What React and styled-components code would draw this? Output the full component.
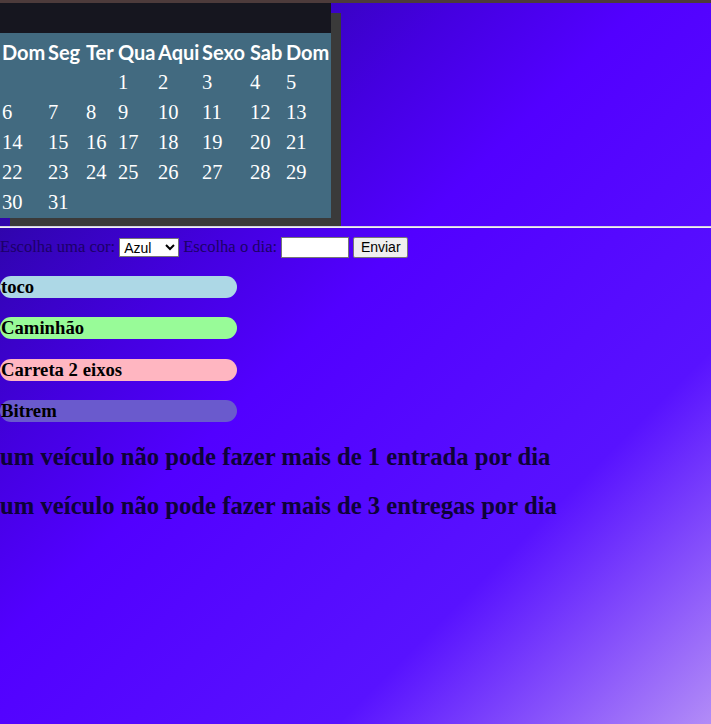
import React from 'react';
import styled, { createGlobalStyle } from 'styled-components';

const GlobalStyle = createGlobalStyle`
  html, body {
    margin: 0;
    padding: 0;
    min-height: 100%;
  }
  body {
    min-height: 100vh;
    font-family: "Liberation Serif", "Times New Roman", serif;
    background: linear-gradient(
      135deg,
      #200870 0%,
      #3204b4 18%,
      #4400e0 32%,
      #5200ff 45%,
      #5812ff 74%,
      #b28cf7 100%
    );
    background-attachment: fixed;
  }
`;

const TopStrip = styled.div`
  height: 3px;
  background-color: #4d3b3b;
`;

const Calendar = styled.div`
  width: 331px;
  box-shadow: 10px 10px 0 #3a3a3a;
`;

const CalendarHead = styled.div`
  height: 30px;
  background-color: #16161f;
`;

const Grid = styled.div`
  display: grid;
  grid-template-columns: 46px 38px 32px 40px 44px 48px 36px 45px;
  grid-auto-rows: 30px;
  padding: 4px 0 1px 2px;
  background-color: #426a80;
  color: #fff;
`;

const DayName = styled.div`
  font-family: Lato, "Open Sans", sans-serif;
  font-weight: 700;
  font-size: 20px;
  line-height: 30px;
  white-space: nowrap;
`;

const DayNumber = styled.div`
  font-family: "Liberation Serif", "Times New Roman", serif;
  font-size: 20.5px;
  line-height: 30px;
`;

const Divider = styled.hr`
  margin: 8px 0 0;
  border: none;
  border-top: 1px solid #cfcfe0;
  border-bottom: 1px solid #f2f2f2;
`;

const Form = styled.form`
  display: flex;
  align-items: center;
  gap: 4px;
  margin-top: 8px;
  height: 22px;
  font-size: 16.6px;
  color: #1c0068;
`;

const Select = styled.select`
  width: 60px;
  height: 19px;
  font-family: "Liberation Sans", Arial, sans-serif;
  font-size: 14px;
  padding: 0;
  border: 1px solid #767676;
  background: #fff;
  color: #000;
`;

const DayInput = styled.input`
  box-sizing: border-box;
  width: 68px;
  height: 21px;
  border: 1px solid #767676;
  background: #fff;
  padding: 0 2px;
`;

const SubmitButton = styled.button`
  box-sizing: border-box;
  width: 55px;
  height: 21px;
  padding: 0;
  font-family: "Liberation Sans", Arial, sans-serif;
  font-size: 14px;
  color: #000;
  background: #efefef;
  border: 1px solid #767676;
  border-radius: 2px;
`;

const Vehicles = styled.div`
  display: flex;
  flex-direction: column;
  gap: 19.4px;
  margin-top: 18px;
`;

const Pill = styled.div`
  width: 237px;
  height: 22px;
  border-radius: 11px;
  background-color: ${p => p.$bg};
  font-size: 18.7px;
  font-weight: 700;
  line-height: 22px;
  color: #000;
  padding-left: 1px;
  box-sizing: border-box;
  white-space: nowrap;
`;

const Rule = styled.h2`
  margin: 21px 0 0;
  font-size: 24.7px;
  line-height: 28px;
  font-weight: 700;
  color: #0e0238;
`;

const days = ['Dom', 'Seg', 'Ter', 'Qua', 'Aqui', 'Sexo', 'Sab', 'Dom'];
const cells = [
  '', '', '', '1', '2', '3', '4', '5',
  '6', '7', '8', '9', '10', '11', '12', '13',
  '14', '15', '16', '17', '18', '19', '20', '21',
  '22', '23', '24', '25', '26', '27', '28', '29',
  '30', '31', '', '', '', '', '', '',
];

const vehicles = [
  { name: 'toco', color: '#add8e6' },
  { name: 'Caminhão', color: '#98fb98' },
  { name: 'Carreta 2 eixos', color: '#ffb6c1' },
  { name: 'Bitrem', color: '#6a5acd' },
];

export default function App() {
  return (
    <>
      <GlobalStyle />
      <TopStrip />
      <Calendar>
        <CalendarHead />
        <Grid>
          {days.map((d, i) => (
            <DayName key={'d' + i}>{d}</DayName>
          ))}
          {cells.map((c, i) => (
            <DayNumber key={'c' + i}>{c}</DayNumber>
          ))}
        </Grid>
      </Calendar>
      <Divider />
      <Form onSubmit={e => e.preventDefault()}>
        <span>Escolha uma cor:</span>
        <Select defaultValue="azul">
          <option value="azul">Azul</option>
          <option value="verde">Verde</option>
          <option value="rosa">Rosa</option>
        </Select>
        <span>Escolha o dia:</span>
        <DayInput type="text" />
        <SubmitButton type="submit">Enviar</SubmitButton>
      </Form>
      <Vehicles>
        {vehicles.map(v => (
          <Pill key={v.name} $bg={v.color}>{v.name}</Pill>
        ))}
      </Vehicles>
      <Rule>um veículo não pode fazer mais de 1 entrada por dia</Rule>
      <Rule>um veículo não pode fazer mais de 3 entregas por dia</Rule>
    </>
  );
}
